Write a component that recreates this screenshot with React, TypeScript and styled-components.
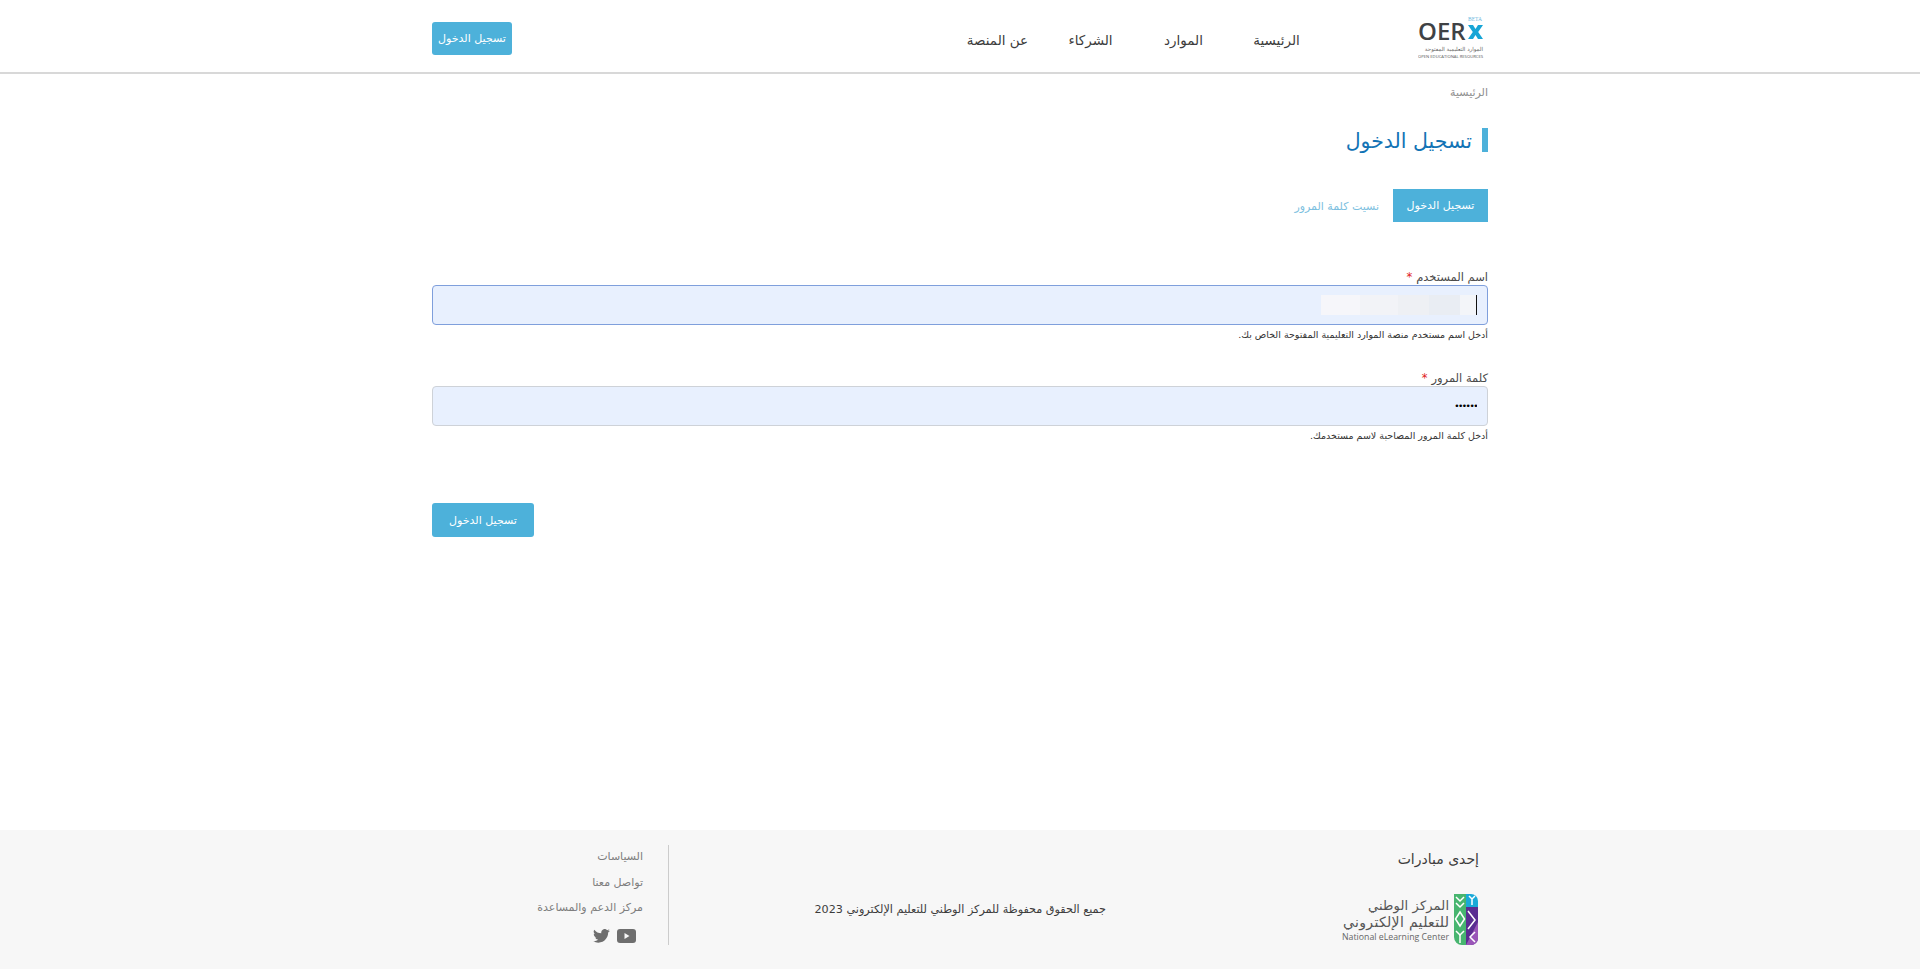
import React from 'react';
import styled, { createGlobalStyle } from 'styled-components';

const arabicFont = `"DejaVu Sans", "Noto Sans", sans-serif`;

const GlobalStyle = createGlobalStyle`
  html, body {
    margin: 0;
    padding: 0;
    background: #fff;
    font-family: ${arabicFont};
  }
  * { box-sizing: border-box; }
`;

const Page = styled.div`
  display: flex;
  flex-direction: column;
  min-height: 969px;
  direction: rtl;
`;

const Container = styled.div`
  width: 1056px;
  margin: 0 auto;
`;

const Header = styled.header`
  height: 74px;
  border-bottom: 2px solid #d8d8d8;
`;

const HeaderInner = styled(Container)`
  display: flex;
  align-items: center;
  height: 72px;
  padding-top: 4px;
`;

const LogoWrap = styled.a`
  display: block;
  width: 70px;
  height: 46px;
`;

const Nav = styled.nav`
  display: flex;
  flex: 1;
  margin-right: 95px;
  padding-top: 4px;
`;

const NavLink = styled.a`
  width: 93px;
  text-align: center;
  font-size: 13.500px;
  color: #3c3c3c;
  text-decoration: none;
`;

const HeaderButton = styled.button`
  width: 80px;
  height: 33px;
  background: #4db1da;
  border: 0;
  border-radius: 3px;
  color: #fff;
  font-family: inherit;
  font-size: 11px;
  padding: 0;
`;

const Main = styled.main`
  flex: 1;
`;

const Breadcrumb = styled.div`
  margin-top: 11px;
  font-size: 11px;
  line-height: 16px;
  color: #8f8f8f;
`;

const Heading = styled.h1`
  margin: 27px 0 0;
  padding-right: 10px;
  border-right: 6px solid #4db1da;
  height: 24px;
  font-size: 20.500px;
  font-weight: 500;
  line-height: 26px;
  color: #1273b5;
`;

const Tabs = styled.div`
  display: flex;
  align-items: center;
  margin-top: 37px;
`;

const ActiveTab = styled.div`
  width: 95px;
  height: 33px;
  line-height: 34px;
  text-align: center;
  background: #4db1da;
  color: #fff;
  font-size: 11px;
`;

const Tab = styled.div`
  margin-right: 14px;
  padding-top: 2px;
  font-size: 11px;
  color: #7dbfe0;
`;

const Form = styled.form`
  margin-top: 47px;
`;

const Field = styled.div`
  margin-bottom: 32px;
  height: 69px;
`;

const Label = styled.label`
  display: block;
  height: 16px;
  font-size: 11.500px;
  line-height: 16px;
  color: #4a4a4a;
`;

const Required = styled.span`
  color: #e01b1b;
  margin-right: 4px;
`;

const InputWrap = styled.div`
  position: relative;
`;

const Input = styled.input<{ $focused?: boolean }>`
  display: block;
  width: 100%;
  height: 40px;
  padding: 0 10px;
  background: #e8f0fe;
  border: 1px solid ${(p) => (p.$focused ? '#7f9fdc' : '#ced2d8')};
  border-radius: 4px;
  font-family: inherit;
  font-size: 9px;
  letter-spacing: -1.500px;
  color: #000;
  outline: none;
  direction: rtl;
`;

const BlurredValue = styled.div`
  position: absolute;
  top: 10px;
  right: 12px;
  width: 155px;
  height: 20px;
  background: linear-gradient(
    to left,
    #f3f5f9 0 10%,
    #e9edf3 10% 30%,
    #eef0f4 30% 50%,
    #f2f3f7 50% 75%,
    #f6f6fa 75% 100%
  );
`;

const Caret = styled.div`
  position: absolute;
  top: 10px;
  right: 11px;
  width: 1px;
  height: 20px;
  background: #111;
`;

const Help = styled.div`
  margin-top: 3px;
  font-size: 9.500px;
  line-height: 13px;
  color: #333;
`;

const SubmitRow = styled.div`
  display: flex;
  justify-content: flex-end;
  margin-top: 64px;
`;

const SubmitButton = styled.button`
  width: 102px;
  height: 34px;
  background: #4db1da;
  border: 0;
  border-radius: 3px;
  color: #fff;
  font-family: inherit;
  font-size: 11px;
  padding: 0;
`;

const Footer = styled.footer`
  height: 139px;
  background: #f7f7f7;
`;

const FooterInner = styled(Container)`
  display: flex;
  height: 139px;
  padding-top: 15px;
`;

const InitiativeCol = styled.div`
  width: 382px;
  padding-right: 9px;
`;

const InitiativeTitle = styled.div`
  font-size: 14px;
  line-height: 28px;
  color: #3c3c3c;
`;

const NelcLogo = styled.svg`
  display: block;
  margin: 20px 1px 0 0;
`;

const Copyright = styled.div`
  width: 437px;
  margin-top: 56px;
  font-size: 11.200px;
  line-height: 18px;
  color: #3c3c3c;
  white-space: nowrap;
`;

const Links = styled.div`
  flex: 1;
  height: 100px;
  border-right: 1px solid #ccc;
`;

const LinkList = styled.div`
  display: flex;
  flex-direction: column;
  padding-right: 25px;
  margin-top: -1px;
`;

const FooterLink = styled.a`
  font-size: 11px;
  line-height: 25.500px;
  color: #7d7d7d;
`;

const Social = styled.div`
  display: flex;
  gap: 7px;
  align-items: center;
  margin-top: 8px;
  margin-right: 7px;
  color: #6e6e6e;
`;

const OerLogo = () => (
  <svg width="70" height="46" viewBox="0 0 70 46" direction="ltr">
    <text x="50" y="6" fontFamily="Liberation Serif, serif" fontSize="5.500" fill="#6cb8e0">BETA</text>
    <text x="0" y="25" fontFamily="Open Sans, sans-serif" fontWeight="600" fontSize="24" fill="#3f4245">OER</text>
    <path d="M50 10 L55 10 L57.500 14 L60 10 L65 10 L60.200 17 L65 24 L60 24 L57.500 20 L55 24 L50 24 L54.800 17 Z" fill="#17a5d6" />
    <text x="65" y="36" direction="rtl" fontFamily="DejaVu Sans, sans-serif" fontSize="5.500" fill="#666">الموارد التعليمية المفتوحة</text>
    <text x="0" y="43" fontFamily="Open Sans, sans-serif" fontSize="4" textLength="65" lengthAdjust="spacingAndGlyphs" fill="#555">OPEN EDUCATIONAL RESOURCES</text>
  </svg>
);

const NelcMark = () => (
  <g transform="translate(116 1)">
    <path d="M0 0 h12 v51 h-4 a8 8 0 0 1 -8 -8 Z" fill="#47b56f" />
    <path d="M12 0 h5 a7 7 0 0 1 7 7 v6 h-12 Z" fill="#19a9d8" />
    <path d="M12 13 h12 v31 a7 7 0 0 1 -7 7 h-5 Z" fill="#5a2d91" />
    <path d="M12 51 h5 a7 7 0 0 0 7 -7 v-16 Z" fill="#9a55b8" />
    <g fill="none" stroke="#fff" strokeWidth="1.500">
      <path d="M2 3 l4 4 l4 -4" />
      <path d="M2 9 l4 4 l4 -4" />
      <path d="M6 18 l-4.500 7 l4.500 7 l4.500 -7 Z" />
      <path d="M2 37 l4 4 l4 -4" />
      <path d="M6 41 v8" />
      <path d="M15 2 l3 3 l3 -3 M18 5 v6" />
      <path d="M14 17 l7 9 l-7 9" />
      <path d="M21 38 l-5 5 l5 5" />
    </g>
  </g>
);

const App: React.FC = () => {
  return (
    <>
      <GlobalStyle />
      <Page>
        <Header>
          <HeaderInner>
            <LogoWrap>
              <OerLogo />
            </LogoWrap>
            <Nav>
              <NavLink>الرئيسية</NavLink>
              <NavLink>الموارد</NavLink>
              <NavLink>الشركاء</NavLink>
              <NavLink>عن المنصة</NavLink>
            </Nav>
            <HeaderButton>تسجيل الدخول</HeaderButton>
          </HeaderInner>
        </Header>
        <Main>
          <Container>
            <Breadcrumb>الرئيسية</Breadcrumb>
            <Heading>تسجيل الدخول</Heading>
            <Tabs>
              <ActiveTab>تسجيل الدخول</ActiveTab>
              <Tab>نسيت كلمة المرور</Tab>
            </Tabs>
            <Form>
              <Field>
                <Label>
                  اسم المستخدم<Required>*</Required>
                </Label>
                <InputWrap>
                  <Input $focused readOnly />
                  <BlurredValue />
                  <Caret />
                </InputWrap>
                <Help>أدخل اسم مستخدم منصة الموارد التعليمية المفتوحة الخاص بك.</Help>
              </Field>
              <Field>
                <Label>
                  كلمة المرور<Required>*</Required>
                </Label>
                <InputWrap>
                  <Input type="password" defaultValue="123456" readOnly />
                </InputWrap>
                <Help>أدخل كلمة المرور المصاحبة لاسم مستخدمك.</Help>
              </Field>
              <SubmitRow>
                <SubmitButton type="button">تسجيل الدخول</SubmitButton>
              </SubmitRow>
            </Form>
          </Container>
        </Main>
        <Footer>
          <FooterInner>
            <InitiativeCol>
              <InitiativeTitle>إحدى مبادرات</InitiativeTitle>
              <NelcLogo width="140" height="52" viewBox="0 0 140 52" direction="ltr">
                <NelcMark />
                <text x="111" y="17" direction="rtl" fontFamily="DejaVu Sans, sans-serif" fontSize="13" textLength="81" fill="#555">المركز الوطني</text>
                <text x="111" y="34" direction="rtl" fontFamily="DejaVu Sans, sans-serif" fontSize="14" textLength="106" fill="#555">للتعليم الإلكتروني</text>
                <text x="4" y="47" fontFamily="Open Sans, sans-serif" fontSize="9" textLength="107" lengthAdjust="spacingAndGlyphs" fill="#666">National eLearning Center</text>
              </NelcLogo>
            </InitiativeCol>
            <Copyright>جميع الحقوق محفوظة للمركز الوطني للتعليم الإلكتروني 2023</Copyright>
            <Links>
              <LinkList>
                <FooterLink>السياسات</FooterLink>
                <FooterLink>تواصل معنا</FooterLink>
                <FooterLink>مركز الدعم والمساعدة</FooterLink>
                <Social>
                  <svg width="19" height="14" viewBox="0 0 19 14"><path d="M3 0 h13 a3 3 0 0 1 3 3 v8 a3 3 0 0 1 -3 3 h-13 a3 3 0 0 1 -3 -3 v-8 a3 3 0 0 1 3 -3 Z" fill="currentColor" /><path d="M7.500 4 L12.500 7 L7.500 10 Z" fill="#f7f7f7" /></svg>
                  <svg width="17" height="14" viewBox="0 0 24 20"><path fill="currentColor" d="M24 2.400a9.800 9.800 0 0 1-2.800.8 4.900 4.900 0 0 0 2.100-2.700 9.800 9.800 0 0 1-3.100 1.200 4.900 4.900 0 0 0-8.400 4.500A14 14 0 0 1 1.700.9a4.900 4.900 0 0 0 1.500 6.600 4.900 4.900 0 0 1-2.200-.6v.1a4.900 4.900 0 0 0 3.900 4.800 4.900 4.900 0 0 1-2.200.1 4.900 4.900 0 0 0 4.600 3.400A9.900 9.900 0 0 1 0 17.300 14 14 0 0 0 7.500 19.500c9.100 0 14-7.500 14-14v-.6A10 10 0 0 0 24 2.400z" /></svg>
                </Social>
              </LinkList>
            </Links>
          </FooterInner>
        </Footer>
      </Page>
    </>
  );
};

export default App;
